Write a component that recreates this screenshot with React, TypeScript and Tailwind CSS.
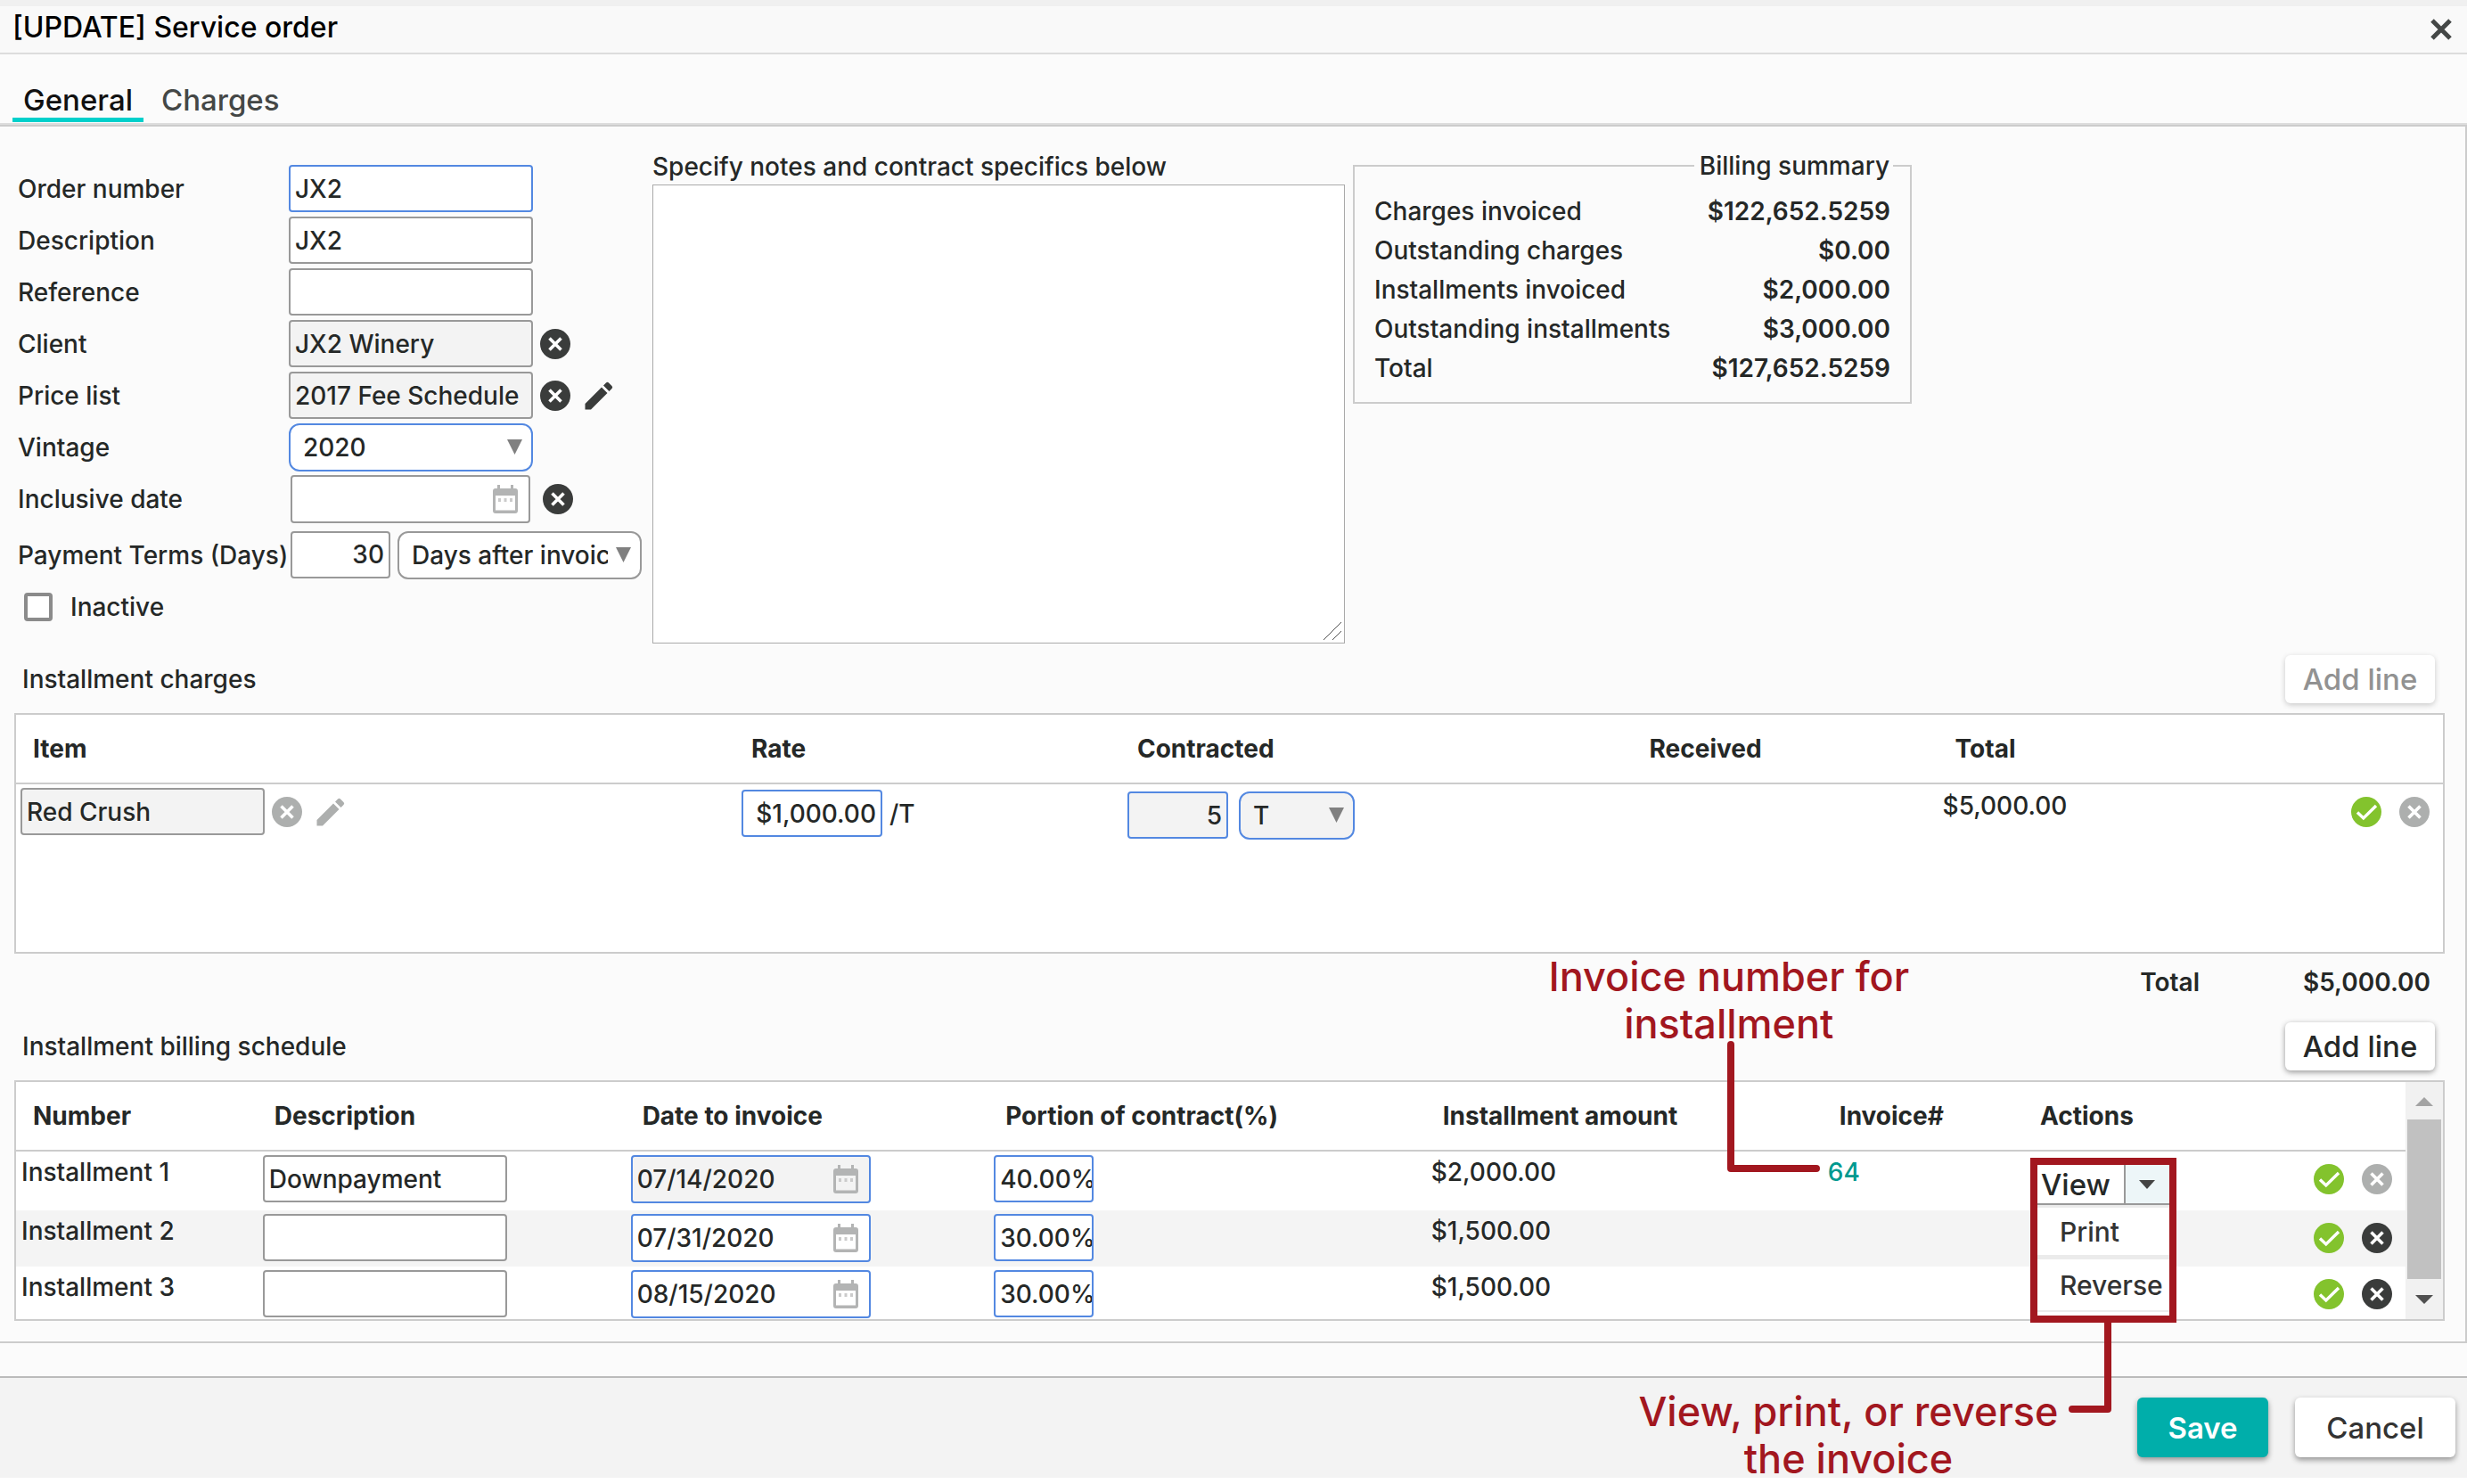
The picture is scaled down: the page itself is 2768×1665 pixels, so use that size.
import React from 'react';

const charges = [
  { id: 1, item: 'Red Crush', rate: '$1,000.00', unit: 'T', contracted: '5', total: '$5,000.00' },
];

const installments = [
  { id: 1, label: 'Installment 1', description: 'Downpayment', date: '07/14/2020', portion: '40.00%', amount: '$2,000.00', invoice: '64', locked: true, row: 'h-[67px]' },
  { id: 2, label: 'Installment 2', description: '', date: '07/31/2020', portion: '30.00%', amount: '$1,500.00', invoice: '', locked: false, row: 'h-[63px] bg-[#f4f4f4]' },
  { id: 3, label: 'Installment 3', description: '', date: '08/15/2020', portion: '30.00%', amount: '$1,500.00', invoice: '', locked: false, row: 'h-[59px]' },
];

const summary = [
  { label: 'Charges invoiced', value: '$122,652.5259' },
  { label: 'Outstanding charges', value: '$0.00' },
  { label: 'Installments invoiced', value: '$2,000.00' },
  { label: 'Outstanding installments', value: '$3,000.00' },
  { label: 'Total', value: '$127,652.5259' },
];

const field = 'h-[53px] rounded-[4px] border-2 pl-[5px]';
const gray = 'border-[#999999]';
const blue = 'border-[#5388e1]';

const ClearIcon = ({ muted = false }) => (
  <svg viewBox="0 0 34 34" className={muted ? 'size-[34px] text-[#adafae]' : 'size-[34px] text-[#3a3c3b]'}>
    <circle cx="17" cy="17" r="17" fill="currentColor" />
    <path d="M10.5 10.5 23.5 23.5M23.5 10.5 10.5 23.5" stroke="#fff" strokeWidth="3.6" />
  </svg>
);

const CheckIcon = () => (
  <svg viewBox="0 0 34 34" className="size-[34px]">
    <circle cx="17" cy="17" r="17" fill="#83c32d" />
    <path d="M7 17.5 13.8 24 28 10" fill="none" stroke="#fff" strokeWidth="3.4" />
  </svg>
);

const PencilIcon = ({ muted = false }) => (
  <svg viewBox="0 0 32 32" className={muted ? 'size-8 text-[#adafae]' : 'size-8 text-[#3a3c3b]'}>
    <path d="M0.5 31.5V25L19 6.5 25.5 13 7 31.5ZM21 4.5 24 1.5Q25.5 0 27 1.5L30.5 5Q32 6.5 30.5 8L27.5 11Z" fill="currentColor" />
  </svg>
);

const CalendarIcon = () => (
  <svg viewBox="0 0 28 32" className="h-8 w-7">
    <path d="M5 0h3v4h12V0h3v4h2a3 3 0 0 1 3 3v22a3 3 0 0 1-3 3H3a3 3 0 0 1-3-3V7a3 3 0 0 1 3-3h2ZM3 12v16.500h22V12Z" fill="#b3b4b4" fillRule="evenodd" />
    <path d="M6 15h3v4H6ZM12.500 15h3v4h-3ZM19 15h3v4h-3Z" fill="#cbcbcb" />
  </svg>
);

const IconButton = ({ label, children }: { label: string; children: React.ReactNode }) => (
  <button type="button" aria-label={label} className="shrink-0">
    {children}
  </button>
);

const SelectBox = ({ id, label, value, className }: { id: string; label?: string; value: string; className: string }) => (
  <div className="relative shrink-0">
    <select id={id} aria-label={label} defaultValue={value} className={`h-[54px] appearance-none rounded-[12px] border-2 pl-3.5 pr-9 ${className}`}>
      <option>{value}</option>
    </select>
    <svg viewBox="0 0 17 17" className="pointer-events-none absolute right-3 top-[18px] size-[17px]">
      <path d="M0 0h17L8.500 17Z" fill="#808080" />
    </svg>
  </div>
);

const DateBox = ({ id, label, value, className }: { id: string; label?: string; value: string; className: string }) => (
  <div className={`flex h-[54px] w-[269px] items-center rounded-[4px] border-2 pl-[5px] pr-3 ${className}`}>
    <input id={id} aria-label={label} defaultValue={value} className="min-w-0 flex-1 bg-transparent outline-none" />
    <IconButton label="Open calendar">
      <CalendarIcon />
    </IconButton>
  </div>
);

const Row = ({ id, label, children }: { id: string; label: string; children: React.ReactNode }) => (
  <div className="flex h-[53px] items-center">
    <label htmlFor={id} className="w-[304px] shrink-0 whitespace-nowrap">
      {label}
    </label>
    <div className="flex items-center gap-2">{children}</div>
  </div>
);

const AddLine = ({ disabled = false }) => (
  <button
    type="button"
    disabled={disabled}
    className="h-[54px] w-[168px] rounded-[6px] bg-white text-[33px] shadow-[0_2px_6px_rgba(0,0,0,0.4)] disabled:text-[#929292] disabled:shadow-[0_2px_6px_rgba(0,0,0,0.2)]"
  >
    Add line
  </button>
);

const ActionMenu = () => (
  <div className="absolute left-2 top-[7px] z-10 h-[185px] w-[164px] border-8 border-[#a2171f] bg-white">
    <div className="flex h-[45px] border-b-2 border-[#999999]">
      <button type="button" className="flex-1 border-r-2 border-[#999999] pl-1 text-left text-[33px] leading-9">
        View
      </button>
      <button type="button" aria-label="More actions" className="flex w-[49px] items-center justify-center bg-[#edf6f8]">
        <svg viewBox="0 0 18 10" className="h-2.5 w-[18px]">
          <path d="M0 0h18L9 10Z" fill="#444" />
        </svg>
      </button>
    </div>
    <ul className="text-[30px] text-[#333333]">
      <li className="h-[61px] border-b-[5px] border-t-[3px] border-[#ebebeb] pl-[25px]">
        <button type="button" className="leading-[55px]">Print</button>
      </li>
      <li className="h-[59px] border-b-2 border-[#ebebeb] pl-[25px]">
        <button type="button" className="leading-[59px]">Reverse</button>
      </li>
    </ul>
  </div>
);

const App = () => (
  <div className="bg-[#fbfbfb] font-['Inter',sans-serif] text-[28px] font-medium leading-10 text-[#252827]">
    <header className="flex items-center justify-between border-b-2 border-t-[7px] border-b-[#dddddd] border-t-[#f0f0f0] bg-[#f9f9f9] pl-3.5 pr-[17px]">
      <h1 className="pb-2 pt-1 text-[32px] font-medium text-black">[UPDATE] Service order</h1>
      <IconButton label="Close">
        <svg viewBox="0 0 24 24" className="size-6">
          <path d="M2 2 22 22M22 2 2 22" stroke="#444746" strokeWidth="5" />
        </svg>
      </IconButton>
    </header>

    <nav className="flex gap-2 border-b-2 border-[#dddddd] px-3.5 pb-px pt-[31px] text-[33px]">
      <a href="#general" className="border-b-[5px] border-[#00d0cb] px-3 text-[#111111]">General</a>
      <a href="#charges" className="border-b-[5px] border-transparent px-3 text-[#444746]">Charges</a>
    </nav>

    <main className="border-b-2 border-r-2 border-t-2 border-[#cccccc] pb-[23px] pt-[25px]">
      <section className="flex items-start pl-5">
        <form className="flex w-[712px] shrink-0 flex-col gap-[5px] pt-[18px]">
          <Row id="order" label="Order number">
            <input id="order" defaultValue="JX2" className={`${field} ${blue} w-[274px] bg-white`} />
          </Row>
          <Row id="description" label="Description">
            <input id="description" defaultValue="JX2" className={`${field} ${gray} w-[274px] bg-white`} />
          </Row>
          <Row id="reference" label="Reference">
            <input id="reference" className={`${field} ${gray} w-[274px] bg-white`} />
          </Row>
          <Row id="client" label="Client">
            <input id="client" readOnly defaultValue="JX2 Winery" className={`${field} ${gray} w-[274px] bg-[#f3f3f3]`} />
            <IconButton label="Clear client"><ClearIcon /></IconButton>
          </Row>
          <Row id="price-list" label="Price list">
            <input id="price-list" readOnly defaultValue="2017 Fee Schedule" className={`${field} ${gray} w-[274px] bg-[#f3f3f3]`} />
            <IconButton label="Clear price list"><ClearIcon /></IconButton>
            <span className="flex pl-2">
              <IconButton label="Edit price list"><PencilIcon /></IconButton>
            </span>
          </Row>
          <Row id="vintage" label="Vintage">
            <SelectBox id="vintage" value="2020" className={`${blue} w-[274px] bg-white`} />
          </Row>
          <Row id="inclusive" label="Inclusive date">
            <span className="flex items-center gap-3.5 pl-0.5">
              <DateBox id="inclusive" value="" className={`${gray} bg-white`} />
              <IconButton label="Clear date"><ClearIcon /></IconButton>
            </span>
          </Row>
          <div className="pt-[5px]">
            <Row id="terms" label="Payment Terms (Days)">
              <span className="flex gap-2 pl-0.5">
                <input id="terms" defaultValue="30" className={`${field} ${gray} w-[112px] bg-white pr-[5px] text-right`} />
                <SelectBox id="terms-basis" label="Terms basis" value="Days after invoice" className={`${gray} w-[274px] bg-white`} />
              </span>
            </Row>
          </div>
          <div className="flex h-[53px] items-center gap-5 pl-[7px]">
            <input id="inactive" type="checkbox" className="size-8 appearance-none rounded-[4px] border-4 border-[#8b8b8b] bg-white" />
            <label htmlFor="inactive">Inactive</label>
          </div>
        </form>

        <div className="relative w-[777px] shrink-0">
          <label htmlFor="notes" className="block">Specify notes and contract specifics below</label>
          <textarea id="notes" className="block h-[515px] w-full resize-none border border-[#aaaaaa] bg-white" />
          <svg viewBox="0 0 20 20" className="pointer-events-none absolute bottom-1 right-1 size-5">
            <path d="M0 20 20 0M10 20 20 10" stroke="#555" strokeWidth="1" />
          </svg>
        </div>

        <fieldset className="ml-[9px] w-[627px] border-2 border-[#cccccc] px-[19px] pb-4 pt-2.5">
          <legend className="ml-auto pl-1.5 pr-1 leading-[38px]">Billing summary</legend>
          <dl className="px-[3px]">
            {summary.map((s) => (
              <div key={s.label} className="flex justify-between leading-[44px]">
                <dt>{s.label}</dt>
                <dd className="font-semibold">{s.value}</dd>
              </div>
            ))}
          </dl>
        </fieldset>
      </section>

      <section>
        <div className="flex items-center justify-between pb-[11px] pl-[25px] pr-[34px] pt-[13px]">
          <h2>Installment charges</h2>
          <AddLine disabled />
        </div>
        <div className="ml-4 mr-[23px] min-h-[270px] border-2 border-[#cccccc] bg-white">
          <table className="w-full table-fixed">
            <thead>
              <tr className="h-[77px] border-b-2 border-[#cccccc] text-left [&>th]:pl-[19px] [&>th]:font-bold">
                <th className="w-[29.6%]">Item</th>
                <th className="w-[15.9%]">Rate</th>
                <th className="w-[21.1%]">Contracted</th>
                <th className="w-[12.6%]">Received</th>
                <th>Total</th>
                <th className="w-[8%]" aria-label="Status" />
              </tr>
            </thead>
            <tbody>
              {charges.map((c) => (
                <tr key={c.id} className="align-top [&>td]:pl-[5px]">
                  <td className="pt-1">
                    <div className="flex items-center gap-2">
                      <input aria-label="Item" readOnly defaultValue={c.item} className={`${field} ${gray} w-[274px] bg-[#f3f3f3]`} />
                      <IconButton label="Clear item"><ClearIcon muted /></IconButton>
                      <span className="flex pl-2">
                        <IconButton label="Edit item"><PencilIcon muted /></IconButton>
                      </span>
                    </div>
                  </td>
                  <td className="pt-1.5">
                    <div className="flex items-center gap-2 pl-[3px]">
                      <input aria-label="Rate" defaultValue={c.rate} className={`${field} ${blue} w-[158px] bg-white pr-[5px] text-right`} />
                      <span>/{c.unit}</span>
                    </div>
                  </td>
                  <td className="pt-2">
                    <div className="flex gap-3 pl-[3px]">
                      <input aria-label="Contracted" readOnly defaultValue={c.contracted} className={`${field} ${blue} w-[113px] bg-[#f3f3f3] pr-[5px] text-right`} />
                      <SelectBox id="unit" label="Unit" value={c.unit} className={`${blue} w-[130px] bg-[#f3f3f3]`} />
                    </div>
                  </td>
                  <td />
                  <td className="pt-1">{c.total}</td>
                  <td className="pt-1">
                    <div className="flex h-[53px] items-center justify-end gap-5 pr-[15px]">
                      <IconButton label="Confirm"><CheckIcon /></IconButton>
                      <IconButton label="Remove"><ClearIcon muted /></IconButton>
                    </div>
                  </td>
                </tr>
              ))}
            </tbody>
          </table>
        </div>
        <p className="flex justify-end gap-[116px] pb-[25px] pr-[39px] pt-3 font-semibold">
          <span>Total</span>
          <span>$5,000.00</span>
        </p>
      </section>

      <section>
        <div className="flex items-center justify-between pb-[11px] pl-[25px] pr-[34px]">
          <h2>Installment billing schedule</h2>
          <AddLine />
        </div>
        <div className="ml-4 mr-[23px] flex border-2 border-[#cccccc] bg-white">
          <table className="w-full flex-1 table-fixed">
            <thead>
              <tr className="h-[77px] border-b-2 border-[#cccccc] text-left [&>th]:pl-[19px] [&>th]:font-bold">
                <th className="w-[10.1%]">Number</th>
                <th className="w-[15.4%]">Description</th>
                <th className="w-[15.2%]">Date to invoice</th>
                <th className="w-[18.3%]">Portion of contract(%)</th>
                <th className="w-[16.6%]">Installment amount</th>
                <th className="w-[8.4%]">Invoice#</th>
                <th>Actions</th>
                <th className="w-[6%]" aria-label="Status" />
              </tr>
            </thead>
            <tbody>
              {installments.map((r) => (
                <tr key={r.id} className={`align-top [&>td]:pl-1.5 [&>td]:pt-1 ${r.row}`}>
                  <td><span className="block leading-[39px]">{r.label}</span></td>
                  <td>
                    <input aria-label="Description" defaultValue={r.description} className={`${field} ${gray} w-[274px] bg-white`} />
                  </td>
                  <td>
                    <DateBox id={`date-${r.id}`} label="Date to invoice" value={r.date} className={r.locked ? `${blue} bg-[#f3f3f3]` : `${blue} bg-white`} />
                  </td>
                  <td>
                    <input aria-label="Portion of contract" defaultValue={r.portion} className={`${field} ${blue} w-[112px] bg-white`} />
                  </td>
                  <td><span className="block leading-[39px]">{r.amount}</span></td>
                  <td className="relative">
                    {r.invoice && (
                      <>
                        <a href="#invoice" className="block leading-[39px] text-[#00998f]">{r.invoice}</a>
                        <p className="absolute -left-[355px] -top-[223px] z-10 w-[500px] text-center text-[45px] leading-[53px] text-[#a2171f]">
                          Invoice number for
                          <br />
                          installment
                        </p>
                        <svg viewBox="0 0 108 150" className="absolute -left-[107px] -top-[124px] z-10 h-[150px] w-[108px]">
                          <path d="M4 4V143H100" fill="none" stroke="#a2171f" strokeWidth="8" strokeLinecap="round" strokeLinejoin="round" />
                        </svg>
                      </>
                    )}
                  </td>
                  <td className="relative">
                    {r.invoice && (
                      <>
                        <ActionMenu />
                        <p className="absolute -left-[446px] top-[265px] z-10 w-[500px] text-center text-[45px] leading-[53px] text-[#a2171f]">
                          View, print, or reverse
                          <br />
                          the invoice
                        </p>
                        <svg viewBox="0 0 56 106" className="absolute left-[47px] top-[190px] z-10 h-[106px] w-14">
                          <path d="M48 0V99H8" fill="none" stroke="#a2171f" strokeWidth="8" strokeLinecap="round" strokeLinejoin="round" />
                        </svg>
                      </>
                    )}
                  </td>
                  <td>
                    <div className="flex h-[54px] items-center justify-end gap-5 pr-[15px]">
                      <IconButton label="Confirm"><CheckIcon /></IconButton>
                      <IconButton label="Remove"><ClearIcon muted={r.locked} /></IconButton>
                    </div>
                  </td>
                </tr>
              ))}
            </tbody>
          </table>
          {/* Scroll track */}
          <div className="flex w-[42px] shrink-0 flex-col items-center bg-[#f1f1f1] pb-[17px] pt-[17px]">
            <svg viewBox="0 0 20 10" className="h-2.5 w-5"><path d="M0 10h20L10 0Z" fill="#a3a3a3" /></svg>
            <div className="mb-[18px] mt-[15px] w-[38px] flex-1 bg-[#c1c1c1]" />
            <svg viewBox="0 0 20 10" className="h-2.5 w-5"><path d="M0 0h20L10 10Z" fill="#505050" /></svg>
          </div>
        </div>
      </section>
    </main>

    <footer className="mt-[37px] flex justify-end gap-[30px] border-t-2 border-[#bbbbbb] bg-[#f3f3f3] pb-[23px] pr-[13px] pt-[22px] text-[33px]">
      <button type="button" className="h-[67px] w-[147px] rounded-[6px] bg-[#00aeaa] font-semibold text-white shadow-[0_3px_6px_rgba(0,0,0,0.4)]">
        Save
      </button>
      <button type="button" className="h-[67px] w-[180px] rounded-[6px] bg-white text-[#333333] shadow-[0_3px_6px_rgba(0,0,0,0.4)]">
        Cancel
      </button>
    </footer>
  </div>
);

export default App;
